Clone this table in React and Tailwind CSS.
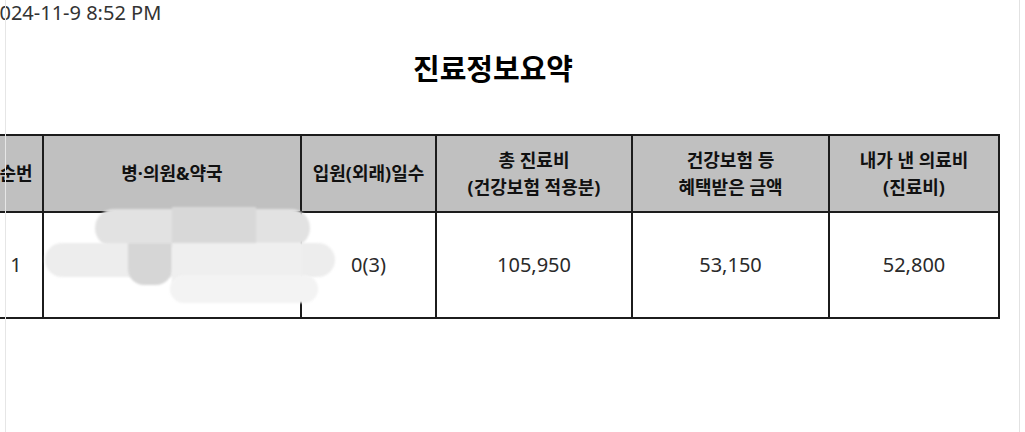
import React from "react";

const font = { fontFamily: '"Noto Sans", "Noto Sans CJK KR", sans-serif' };

const headers = [
  ["순번"],
  ["병·의원&약국"],
  ["입원(외래)일수"],
  ["총 진료비", "(건강보험 적용분)"],
  ["건강보험 등", "혜택받은 금액"],
  ["내가 낸 의료비", "(진료비)"],
];

const widths = ["w-[52px]", "w-[258px]", "w-[135px]", "w-[196px]", "w-[197px]", "w-[170px]"];

const row = ["1", "", "0(3)", "105,950", "53,150", "52,800"];

function Smudge() {
  // blurred-out hospital name, laid over the cell
  return (
    <div className="pointer-events-none absolute left-[40px] top-[203px] h-[108px] w-[300px]">
      <div className="absolute left-[55px] top-[6px] h-[38px] w-[215px] rounded-full bg-[#e2e2e2] blur-[1px]" />
      <div className="absolute left-[5px] top-[40px] h-[34px] w-[290px] rounded-full bg-[#ededed] blur-[1px]" />
      <div className="absolute left-[132px] top-[4px] h-[40px] w-[84px] bg-[#d8d8d8] blur-[1px]" />
      <div className="absolute left-[88px] top-[40px] h-[42px] w-[44px] rounded-b-[16px] bg-[#d6d6d6] blur-[1px]" />
      <div className="absolute left-[132px] top-[40px] h-[40px] w-[130px] bg-[#efefef] blur-[1px]" />
      <div className="absolute left-[130px] top-[72px] h-[28px] w-[148px] rounded-full bg-[#f3f3f3] blur-[1px]" />
    </div>
  );
}

export default function App() {
  return (
    <div className="relative h-[432px] w-[1025px] overflow-hidden bg-white text-[#111]" style={font}>
      <div className="ml-[-12px] w-[1010px]">
        <div className="text-[20px] leading-[26px] text-[#333]">2024-11-9 8:52 PM</div>
        <h1 className="mt-[24px] text-center text-[29px] font-bold leading-[38px] text-black">진료정보요약</h1>
        <table className="mt-[46px] w-full table-fixed border-collapse">
          <colgroup>
            {widths.map((w, i) => (
              <col key={i} className={i === 0 ? "w-[54px]" : w} />
            ))}
          </colgroup>
          <thead>
            <tr className="h-[77px] bg-[#c0c0c0]">
              {headers.map((lines, i) => (
                <th key={i} className="border-2 border-[#1c1c1c] px-1 text-center text-[18px] font-bold leading-[27px] text-[#111]">
                  {lines.map((l, j) => (
                    <div key={j}>{l}</div>
                  ))}
                </th>
              ))}
            </tr>
          </thead>
          <tbody>
            <tr className="h-[106px]">
              {row.map((v, i) => (
                <td key={i} className="border-2 border-[#1c1c1c] text-center text-[20px] text-[#2a2a2a]">
                  {v}
                </td>
              ))}
            </tr>
          </tbody>
        </table>
      </div>
      <Smudge />
      <div className="absolute left-[5px] top-0 h-full w-px bg-[#e6e6e6]" />
      <div className="absolute left-[1019px] top-0 h-full w-px bg-[#e2e2e2]" />
    </div>
  );
}
